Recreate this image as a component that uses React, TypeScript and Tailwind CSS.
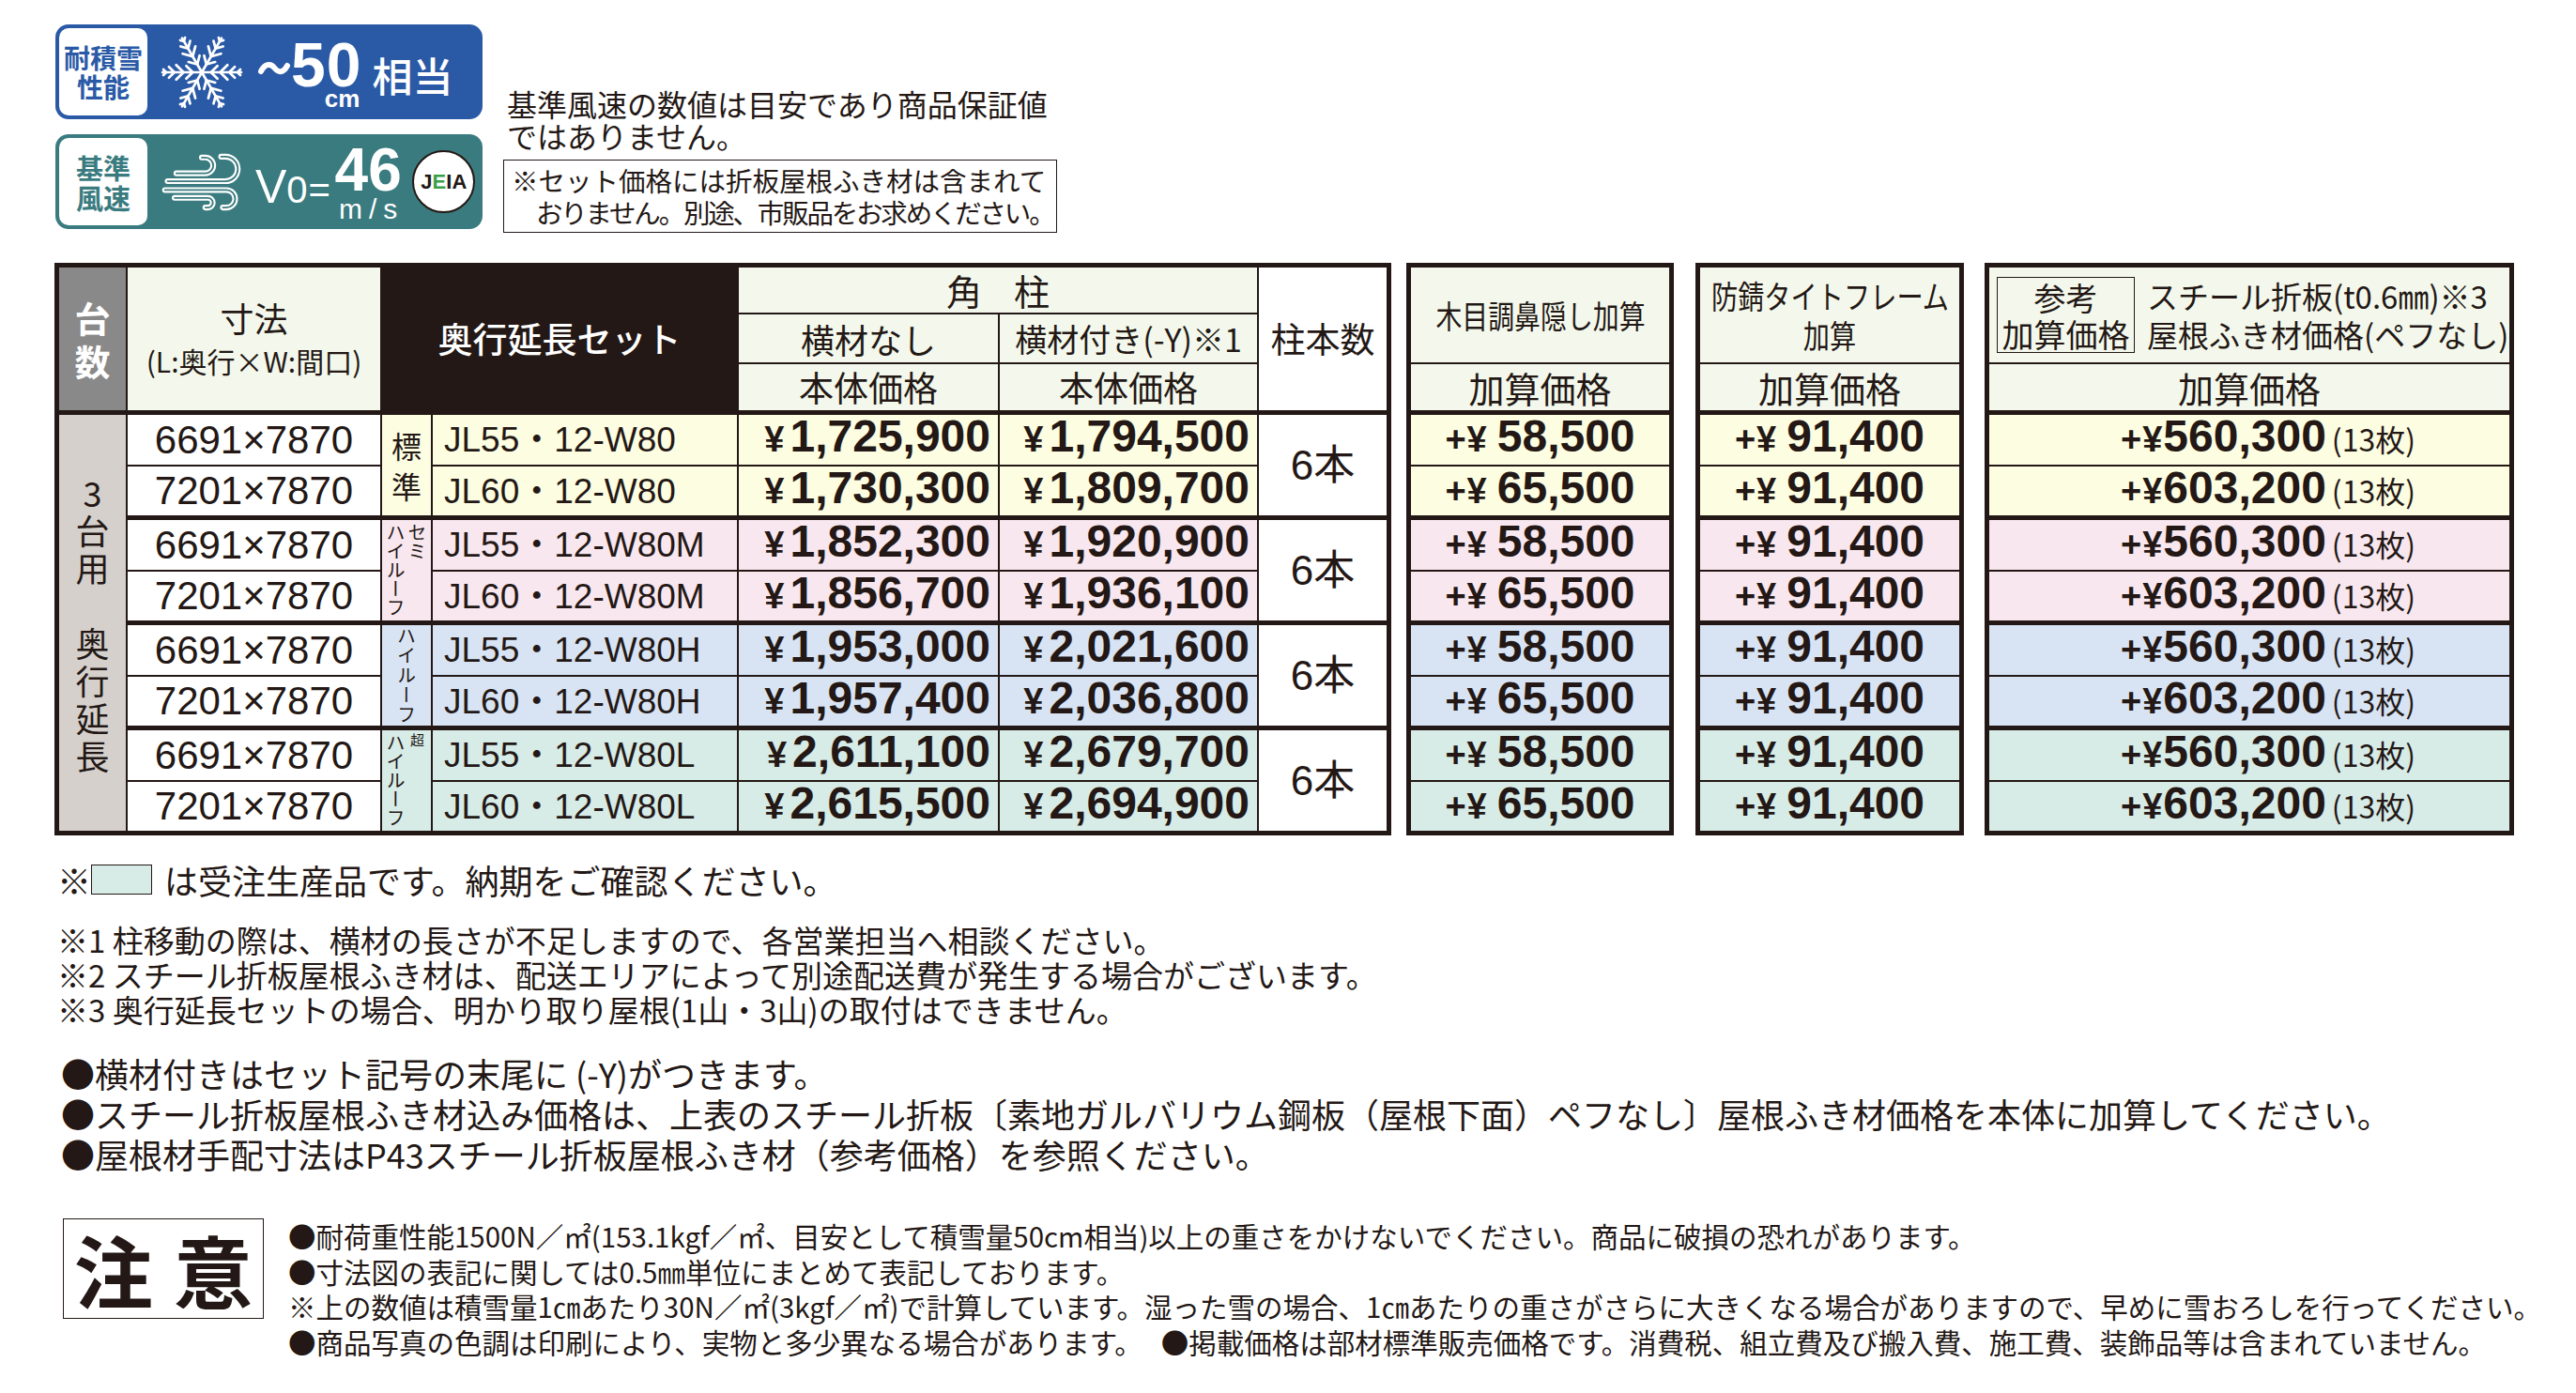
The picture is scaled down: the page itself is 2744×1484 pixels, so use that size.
import React from 'react';

type Row = { dim: string; set: string; p1: string; p2: string; a: string; b: string; c: string };
type Kind = 'std' | 'semi' | 'high' | 'super';
type Group = { bg: string; kind: Kind; rows: Row[] };

const GROUPS: Group[] = [
  {
    bg: 'bg-[#fdfde1]',
    kind: 'std',
    rows: [
      { dim: '6691×7870', set: 'JL55・12-W80', p1: '1,725,900', p2: '1,794,500', a: '58,500', b: '91,400', c: '560,300' },
      { dim: '7201×7870', set: 'JL60・12-W80', p1: '1,730,300', p2: '1,809,700', a: '65,500', b: '91,400', c: '603,200' },
    ],
  },
  {
    bg: 'bg-[#f9e7ef]',
    kind: 'semi',
    rows: [
      { dim: '6691×7870', set: 'JL55・12-W80M', p1: '1,852,300', p2: '1,920,900', a: '58,500', b: '91,400', c: '560,300' },
      { dim: '7201×7870', set: 'JL60・12-W80M', p1: '1,856,700', p2: '1,936,100', a: '65,500', b: '91,400', c: '603,200' },
    ],
  },
  {
    bg: 'bg-[#d8e4f4]',
    kind: 'high',
    rows: [
      { dim: '6691×7870', set: 'JL55・12-W80H', p1: '1,953,000', p2: '2,021,600', a: '58,500', b: '91,400', c: '560,300' },
      { dim: '7201×7870', set: 'JL60・12-W80H', p1: '1,957,400', p2: '2,036,800', a: '65,500', b: '91,400', c: '603,200' },
    ],
  },
  {
    bg: 'bg-[#d7ebe7]',
    kind: 'super',
    rows: [
      { dim: '6691×7870', set: 'JL55・12-W80L', p1: '2,611,100', p2: '2,679,700', a: '58,500', b: '91,400', c: '560,300' },
      { dim: '7201×7870', set: 'JL60・12-W80L', p1: '2,615,500', p2: '2,694,900', a: '65,500', b: '91,400', c: '603,200' },
    ],
  },
];

const LIB = "font-['Liberation_Sans','Noto_Sans_CJK_JP',sans-serif]";
const ROWS = 'grid-rows-[48px_51px_49px_1px_53px_52px_1px_53px_52px_1px_53px_52px_1px_53px_52px]';
const HEAD = 'bg-[#f4f8ec]';

function Snowflake() {
  const arms = [0, 60, 120, 180, 240, 300];
  return (
    <svg width="90" height="80" viewBox="-46 -41 92 82" fill="none" stroke="white" strokeWidth="2.8" strokeLinecap="round" strokeLinejoin="round">
      {arms.map((a) => (
        <g key={a} transform={`rotate(${a})`}>
          <path d="M0 0 H43" />
          <path d="M10 0 L17 -7 M10 0 L17 7" />
          <path d="M20 0 L28 -8 M20 0 L28 8" />
          <path d="M30 0 L36 -6 M30 0 L36 6" />
          <path d="M39 0 L42 -3 M39 0 L42 3" />
        </g>
      ))}
    </svg>
  );
}

function Wind() {
  const d = [
    'M14 22 H47 A9 9 0 0 0 47 4 H43',
    'M4 31 H70 A14 14 0 0 0 70 3 H65',
    'M1 41 H71 A10 10 0 0 1 71 61 H67',
    'M12 50 H50 A5.5 5.5 0 0 1 50 61 H47',
  ];
  return (
    <svg width="86" height="62" viewBox="-3 -1 92 66" fill="none" strokeLinecap="round" strokeLinejoin="round">
      {d.map((p, i) => (
        <path key={'w' + i} d={p} stroke="white" strokeWidth="6.5" />
      ))}
      {d.map((p, i) => (
        <path key={'t' + i} d={p} stroke="#3a7b7f" strokeWidth="2" />
      ))}
    </svg>
  );
}

function Tilde() {
  return (
    <svg width="34" height="16" viewBox="0 0 34 16" fill="none">
      <path d="M3 11 C7 3, 13 2, 17 7 S 26 14, 31 5" stroke="white" strokeWidth="6" strokeLinecap="round" />
    </svg>
  );
}

function TypeLabel({ kind }: { kind: Kind }) {
  if (kind === 'std') {
    return (
      <div className="flex flex-col items-center justify-center h-full text-[32px] leading-[43px]">
        <span>標</span>
        <span>準</span>
      </div>
    );
  }
  if (kind === 'semi') {
    return (
      <div className="flex justify-center h-full pt-[3px]">
        <span className="[writing-mode:vertical-rl] text-[20px] leading-[23px] whitespace-nowrap">
          セミ
          <br />
          ハイルーフ
        </span>
      </div>
    );
  }
  if (kind === 'high') {
    return (
      <div className="flex items-center justify-center h-full">
        <span className="[writing-mode:vertical-rl] text-[20px] leading-[23px] tracking-[1px] whitespace-nowrap">ハイルーフ</span>
      </div>
    );
  }
  return (
    <div className="flex justify-center h-full pt-[3px]">
      <span className="[writing-mode:vertical-rl] text-[20px] leading-[23px] whitespace-nowrap">
        <span className="text-[15px]">超</span>
        <br />
        ハイルーフ
      </span>
    </div>
  );
}

function Price({ v }: { v: string }) {
  return (
    <div className="flex items-baseline">
      <span className={`${LIB} font-bold text-[38px] mr-[6px]`}>¥</span>
      <span className={`${LIB} font-bold text-[48px] leading-none`}>{v}</span>
    </div>
  );
}

function AddPrice({ v }: { v: string }) {
  return (
    <div className="flex items-baseline">
      <span className={`${LIB} font-bold text-[38px] mr-[10px] tracking-[1px]`}>+¥</span>
      <span className={`${LIB} font-bold text-[48px] leading-none`}>{v}</span>
    </div>
  );
}

function MainTable() {
  const col3 = ['3', '台', '用', '', '奥', '行', '延', '長'];
  return (
    <div className={`grid grid-cols-[71px_269px_52px_324px_276px_274px_136px] ${ROWS} gap-[2px] bg-[#231815] p-[5px] w-[1424px]`}>
      <div className="row-span-3 bg-[#898989] flex flex-col items-center justify-center text-white font-bold text-[38px] leading-[46px]">
        <span>台</span>
        <span>数</span>
      </div>
      <div className={`row-span-3 ${HEAD} flex flex-col items-center justify-center leading-[46px]`}>
        <span className="text-[36px]">寸法</span>
        <span className="text-[30px]">(L:奥行×W:間口)</span>
      </div>
      <div className="col-span-2 row-span-3 flex items-center justify-center text-white text-[37px] font-medium">奥行延長セット</div>
      <div className={`col-span-2 ${HEAD} flex items-center justify-center gap-[34px] text-[38px] leading-none`}>
        <span>角</span>
        <span>柱</span>
      </div>
      <div className="row-span-3 bg-white flex items-center justify-center text-[37px]">柱本数</div>
      <div className={`${HEAD} flex items-center justify-center text-[36px] leading-none`}>横材なし</div>
      <div className={`${HEAD} flex items-center justify-center text-[34px] leading-none whitespace-nowrap`}>横材付き(-Y)※1</div>
      <div className={`${HEAD} flex items-center justify-center text-[37px] leading-none`}>本体価格</div>
      <div className={`${HEAD} flex items-center justify-center text-[37px] leading-none`}>本体価格</div>
      <div className="col-span-7" />
      {GROUPS.map((g, gi) => (
        <React.Fragment key={gi}>
          {gi === 0 && (
            <div className="row-span-11 bg-[#d5d0cc] flex flex-col items-center justify-center text-[36px]">
              {col3.map((c, i) => (
                <span key={i} className="h-[40px] leading-[40px]">
                  {c}
                </span>
              ))}
            </div>
          )}
          <div className={`bg-white flex items-center justify-center ${LIB} text-[42px] leading-none`}>{g.rows[0].dim}</div>
          <div className={`row-span-2 ${g.bg}`}>
            <TypeLabel kind={g.kind} />
          </div>
          <div className={`${g.bg} flex items-center pl-[12px] ${LIB} text-[37px] leading-none whitespace-nowrap`}>{g.rows[0].set}</div>
          <div className={`${g.bg} flex items-center justify-end pr-[8px]`}>
            <Price v={g.rows[0].p1} />
          </div>
          <div className={`${g.bg} flex items-center justify-end pr-[8px]`}>
            <Price v={g.rows[0].p2} />
          </div>
          <div className={`row-span-2 bg-white flex items-center justify-center ${LIB} text-[44px] leading-none`}>6本</div>
          <div className={`bg-white flex items-center justify-center ${LIB} text-[42px] leading-none`}>{g.rows[1].dim}</div>
          <div className={`${g.bg} flex items-center pl-[12px] ${LIB} text-[37px] leading-none whitespace-nowrap`}>{g.rows[1].set}</div>
          <div className={`${g.bg} flex items-center justify-end pr-[8px]`}>
            <Price v={g.rows[1].p1} />
          </div>
          <div className={`${g.bg} flex items-center justify-end pr-[8px]`}>
            <Price v={g.rows[1].p2} />
          </div>
          {gi < 3 && <div className="col-span-6" />}
        </React.Fragment>
      ))}
    </div>
  );
}

function TableWood() {
  return (
    <div className={`grid grid-cols-[275px] ${ROWS} gap-[2px] bg-[#231815] p-[5px] w-[285px] ml-[16px]`}>
      <div className={`row-span-2 ${HEAD} flex items-center justify-center`}>
        <span className="inline-block scale-x-[0.82] text-[34px] leading-none whitespace-nowrap">木目調鼻隠し加算</span>
      </div>
      <div className={`${HEAD} flex items-center justify-center text-[38px] leading-none`}>加算価格</div>
      <div />
      {GROUPS.map((g, gi) => (
        <React.Fragment key={gi}>
          {g.rows.map((r, ri) => (
            <div key={ri} className={`${g.bg} flex items-center justify-center`}>
              <AddPrice v={r.a} />
            </div>
          ))}
          {gi < 3 && <div />}
        </React.Fragment>
      ))}
    </div>
  );
}

function TableRust() {
  return (
    <div className={`grid grid-cols-[276px] ${ROWS} gap-[2px] bg-[#231815] p-[5px] w-[286px] ml-[23px]`}>
      <div className={`row-span-2 ${HEAD} flex flex-col items-center justify-center leading-[42px]`}>
        <span className="inline-block scale-x-[0.83] text-[34px] whitespace-nowrap">防錆タイトフレーム</span>
        <span className="inline-block scale-x-[0.83] text-[34px] whitespace-nowrap">加算</span>
      </div>
      <div className={`${HEAD} flex items-center justify-center text-[38px] leading-none`}>加算価格</div>
      <div />
      {GROUPS.map((g, gi) => (
        <React.Fragment key={gi}>
          {g.rows.map((r, ri) => (
            <div key={ri} className={`${g.bg} flex items-center justify-center`}>
              <AddPrice v={r.b} />
            </div>
          ))}
          {gi < 3 && <div />}
        </React.Fragment>
      ))}
    </div>
  );
}

function TableSteel() {
  return (
    <div className={`grid grid-cols-[554px] ${ROWS} gap-[2px] bg-[#231815] p-[5px] w-[564px] ml-[22px]`}>
      <div className={`row-span-2 ${HEAD} flex items-center pl-[8px]`}>
        <div className="w-[147px] h-[81px] border-[1.5px] border-[#231815] flex flex-col items-center justify-center text-[34px] leading-[39px]">
          <span>参考</span>
          <span>加算価格</span>
        </div>
        <div className="ml-[13px] flex flex-col text-[33px] leading-[41px] whitespace-nowrap">
          <span>スチール折板(t0.6㎜)※3</span>
          <span>屋根ふき材価格(ペフなし)</span>
        </div>
      </div>
      <div className={`${HEAD} flex items-center justify-center text-[38px] leading-none`}>加算価格</div>
      <div />
      {GROUPS.map((g, gi) => (
        <React.Fragment key={gi}>
          {g.rows.map((r, ri) => (
            <div key={ri} className={`${g.bg} flex items-center justify-center pl-[40px]`}>
              <div className="flex items-baseline">
                <span className={`${LIB} font-bold text-[38px] tracking-[1px]`}>+¥</span>
                <span className={`${LIB} font-bold text-[48px] leading-none`}>{r.c}</span>
                <span className="text-[32px] ml-[6px]">(13枚)</span>
              </div>
            </div>
          ))}
          {gi < 3 && <div />}
        </React.Fragment>
      ))}
    </div>
  );
}

function Badges() {
  return (
    <div className="flex flex-col gap-[16px] w-[455px]">
      <div className="h-[101px] rounded-[14px] bg-[#2a5aa6] p-[4px] flex items-center">
        <div className="w-[94px] h-[93px] rounded-[10px] bg-white flex flex-col items-center justify-center text-[#2a5aa6] font-bold text-[28px] leading-[31px]">
          <span>耐積雪</span>
          <span>性能</span>
        </div>
        <div className="ml-[13px]">
          <Snowflake />
        </div>
        <div className="ml-[15px] mt-[-8px]">
          <Tilde />
        </div>
        <div className="ml-[1px] flex flex-col items-end text-white">
          <span className={`${LIB} font-bold text-[66px] leading-none tracking-[1px]`}>50</span>
          <span className={`${LIB} font-bold text-[26px] leading-none mt-[-10px] mr-[2px]`}>cm</span>
        </div>
        <div className="ml-[11px] mt-[6px] text-white text-[43px] font-medium leading-none">相当</div>
      </div>
      <div className="h-[101px] rounded-[14px] bg-[#3a7b7f] p-[4px] flex items-center">
        <div className="w-[94px] h-[93px] rounded-[10px] bg-white flex flex-col items-center justify-center text-[#3a7b7f] font-bold text-[29px] leading-[32px]">
          <span>基準</span>
          <span>風速</span>
        </div>
        <div className="ml-[15px]">
          <Wind />
        </div>
        <div className={`ml-[14px] flex items-baseline text-white ${LIB} leading-none mt-[10px]`}>
          <span className="text-[50px]">V</span>
          <span className="text-[40px]">0</span>
          <span className="text-[40px] ml-[1px]">=</span>
        </div>
        <div className="ml-[2px] flex flex-col items-center text-white">
          <span className={`${LIB} font-bold text-[64px] leading-none`}>46</span>
          <span className={`${LIB} text-[30px] leading-none mt-[-5px] tracking-[7px] pl-[7px]`}>m/s</span>
        </div>
        <div className={`ml-[9px] w-[67px] h-[67px] rounded-full bg-white border-2 border-[#231815] flex items-center justify-center ${LIB} font-bold text-[22px] text-[#231815]`}>
          J<span className="text-[#3aa047]">E</span>IA
        </div>
      </div>
    </div>
  );
}

export default function App() {
  return (
    <div className="w-[2744px] h-[1484px] overflow-hidden bg-white text-[#231815] font-['Noto_Sans_CJK_JP','Noto_Sans',sans-serif]">
      <div className="flex h-[280px] pt-[26px] pl-[59px]">
        <Badges />
        <div className="ml-[22px] pt-[67px]">
          <div className="text-[32px] leading-[34px] whitespace-nowrap pl-[4px]">
            <div>基準風速の数値は目安であり商品保証値</div>
            <div>ではありません。</div>
          </div>
          <div className="mt-[9px] w-[590px] h-[78px] border-[1.5px] border-[#231815] pl-[8px] pt-[4px] text-[28.5px] leading-[34px] whitespace-nowrap">
            <div>※セット価格には折板屋根ふき材は含まれて</div>
            <div className="pl-[26px] tracking-[-2.2px]">おりません。別途、市販品をお求めください。</div>
          </div>
        </div>
      </div>

      <div className="flex pl-[58px]">
        <MainTable />
        <TableWood />
        <TableRust />
        <TableSteel />
      </div>

      <div className="mt-[25px] ml-[61px] flex items-center text-[36px] leading-[44px] whitespace-nowrap">
        <span>※</span>
        <span className="w-[65px] h-[32px] bg-[#d7ebe7] border border-[#231815] mr-[13px]" />
        <span>は受注生産品です。納期をご確認ください。</span>
      </div>

      <div className="mt-[24px] ml-[61px] text-[33px] leading-[37px] whitespace-nowrap">
        <div>※1 柱移動の際は、横材の長さが不足しますので、各営業担当へ相談ください。</div>
        <div>※2 スチール折板屋根ふき材は、配送エリアによって別途配送費が発生する場合がございます。</div>
        <div>※3 奥行延長セットの場合、明かり取り屋根(1山・3山)の取付はできません。</div>
      </div>

      <div className="mt-[28px] ml-[65px] text-[36px] leading-[43px] whitespace-nowrap">
        <div>●横材付きはセット記号の末尾に (-Y)がつきます。</div>
        <div>●スチール折板屋根ふき材込み価格は、上表のスチール折板〔素地ガルバリウム鋼板（屋根下面）ペフなし〕屋根ふき材価格を本体に加算してください。</div>
        <div>●屋根材手配寸法はP43スチール折板屋根ふき材（参考価格）を参照ください。</div>
      </div>

      <div className="mt-[47px] ml-[67px] flex items-start">
        <div className="w-[214px] h-[107px] border-[1.5px] border-[#231815] flex items-center justify-center gap-[22px] text-[84px] font-bold leading-none">
          <span>注</span>
          <span>意</span>
        </div>
        <div className="ml-[26px] text-[29.5px] leading-[37.7px] whitespace-nowrap">
          <div>●耐荷重性能1500N／㎡(153.1kgf／㎡、目安として積雪量50cm相当)以上の重さをかけないでください。商品に破損の恐れがあります。</div>
          <div>●寸法図の表記に関しては0.5㎜単位にまとめて表記しております。</div>
          <div>※上の数値は積雪量1㎝あたり30N／㎡(3kgf／㎡)で計算しています。湿った雪の場合、1㎝あたりの重さがさらに大きくなる場合がありますので、早めに雪おろしを行ってください。</div>
          <div className="flex gap-[20px]">
            <span>●商品写真の色調は印刷により、実物と多少異なる場合があります。</span>
            <span>●掲載価格は部材標準販売価格です。消費税、組立費及び搬入費、施工費、装飾品等は含まれていません。</span>
          </div>
        </div>
      </div>
    </div>
  );
}
